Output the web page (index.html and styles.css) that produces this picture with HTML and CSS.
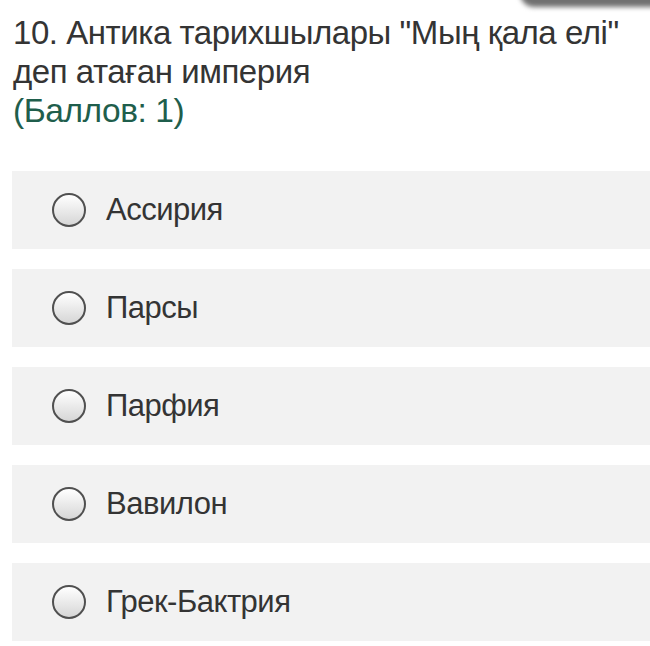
FILE: index.html
```html
<!DOCTYPE html>
<html lang="kk">
<head>
<meta charset="utf-8">
<title>Сұрақ 10</title>
<link rel="stylesheet" href="styles.css">
</head>
<body>
<div class="page">
  <div class="top-shadow"></div>
  <div class="question">
    <div class="q-text">10. Антика тарихшылары "Мың қала елі" деп атаған империя</div>
    <div class="q-points">(Баллов: 1)</div>
  </div>
  <div class="options">
    <label class="option"><span class="radio"></span><span class="opt-text">Ассирия</span></label>
    <label class="option"><span class="radio"></span><span class="opt-text">Парсы</span></label>
    <label class="option"><span class="radio"></span><span class="opt-text">Парфия</span></label>
    <label class="option"><span class="radio"></span><span class="opt-text">Вавилон</span></label>
    <label class="option"><span class="radio"></span><span class="opt-text">Грек-Бактрия</span></label>
  </div>
</div>
</body>
</html>
```
FILE: styles.css
```css
* { box-sizing: border-box; }
html, body { margin: 0; padding: 0; background: #fff; }
body {
  font-family: "Liberation Sans", Arial, sans-serif;
  color: #333;
  width: 650px;
  height: 646px;
  overflow: hidden;
}
.page {
  position: relative;
  padding: 13px 0 0 12px;
}
.top-shadow {
  position: absolute;
  top: -7px;
  right: -12px;
  width: 142px;
  height: 14px;
  border-radius: 0 0 0 14px;
  background: #707070;
  filter: blur(2.5px);
}
.question {
  padding-left: 1px;
  padding-right: 8px;
}
.q-text {
  font-size: 33px;
  line-height: 39px;
  letter-spacing: -0.45px;
  color: #343434;
}
.q-points {
  font-size: 33.5px;
  line-height: 39px;
  letter-spacing: -0.45px;
  color: #1f5e4c;
}
.options {
  display: flex;
  flex-direction: column;
  gap: 20px;
  margin-top: 41px;
}
.option {
  display: flex;
  align-items: center;
  height: 78px;
  background: #f2f2f2;
  padding-left: 40px;
}
.radio {
  width: 34px;
  height: 34px;
  border-radius: 50%;
  border: 2px solid #505050;
  background: linear-gradient(#ffffff, #d6d6d6);
  flex: none;
}
.opt-text {
  margin-left: 20px;
  font-size: 31px;
  letter-spacing: -0.5px;
  color: #343434;
}
```
